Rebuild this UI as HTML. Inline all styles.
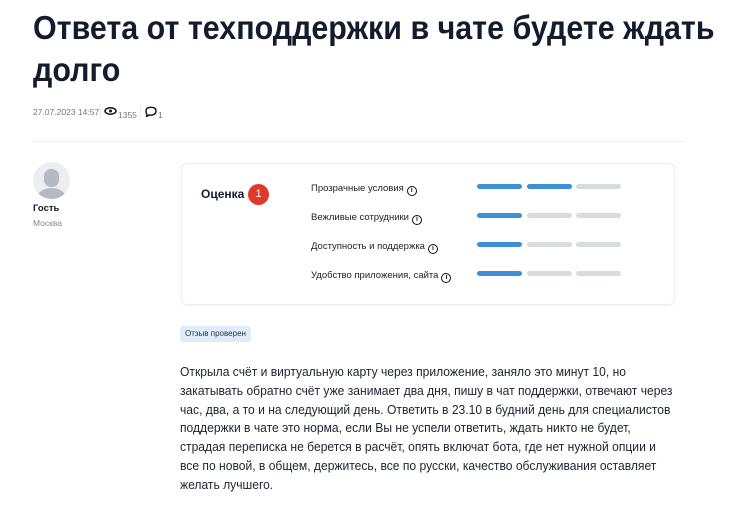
<!DOCTYPE html>
<html><head><meta charset="utf-8"><style>
*{margin:0;padding:0;box-sizing:border-box}
body{width:751px;height:507px;background:#fff;font-family:"Liberation Sans","Noto Sans CJK SC",sans-serif;color:#141b2d;position:relative;overflow:hidden}
.abs{position:absolute}
.h{position:absolute;left:33px;font-size:33px;line-height:42px;font-weight:bold;white-space:nowrap;transform:scaleX(0.922);transform-origin:0 0;color:#141b2d}
.meta{font-size:8.5px;color:#777;white-space:nowrap}
.hr{left:33px;top:141px;width:653px;height:1px;background:#f0f0f0}
.card{left:181px;top:163px;width:494px;height:142px;border:1px solid #eee;border-radius:6px;box-shadow:0 1px 3px rgba(0,0,0,.05)}
.lab{left:311px;font-size:9.5px;color:#222;white-space:nowrap;line-height:12px}
.i{display:inline-block;width:10px;height:10px;border:1.4px solid #111;border-radius:50%;font-size:7px;line-height:7px;text-align:center;font-weight:bold;vertical-align:-1px;margin-left:3px}
.bar{width:45px;height:5px;border-radius:3px;background:#d8dbe0}
.b{background:#3d8fd6}
.txt{left:180px;top:363px;font-size:13px;line-height:18.8px;color:#1d2333;white-space:nowrap;transform:scaleX(0.93);transform-origin:0 0}
</style></head><body>
<div class="h" style="top:7px">Ответа от техподдержки в чате будете ждать</div>
<div class="h" style="top:49px">долго</div>
<div class="abs meta" style="left:33px;top:107px">27.07.2023 14:57</div>
<div class="abs" style="left:100px;top:104px;width:1px;height:14px;background:#eee"></div>
<svg class="abs" style="left:104px;top:107px" width="13" height="8" viewBox="0 0 13 8"><ellipse cx="6.5" cy="4" rx="5.5" ry="3.2" fill="none" stroke="#111" stroke-width="1.5"/><circle cx="6.5" cy="4" r="1.5" fill="#111"/></svg>
<div class="abs meta" style="left:118px;top:110px">1355</div>
<div class="abs" style="left:140px;top:104px;width:1px;height:14px;background:#eee"></div>
<svg class="abs" style="left:145px;top:106px" width="12" height="11" viewBox="0 0 12 11"><path d="M2 8.5 L1.5 10.5 L4 9 Q6 9.3 8 8.8 Q11 8 11 5 Q11 1.3 6 1.3 Q1 1.3 1 5 Q1 7 2 8.5Z" fill="none" stroke="#111" stroke-width="1.4"/></svg>
<div class="abs meta" style="left:158px;top:110px">1</div>
<div class="abs hr"></div>
<div class="abs" style="left:33px;top:162px;width:37px;height:37px;border-radius:50%;background:#eceef1;overflow:hidden">
<div class="abs" style="left:11px;top:7px;width:15px;height:18px;border-radius:7px;background:#b4b9c2"></div>
<div class="abs" style="left:4px;top:26px;width:29px;height:20px;border-radius:50%;background:#b4b9c2"></div></div>
<div class="abs" style="left:33px;top:203px;font-size:9.5px;font-weight:bold">Гость</div>
<div class="abs" style="left:33px;top:218px;font-size:8.5px;color:#888">Москва</div>
<div class="abs card"></div>
<div class="abs" style="left:201px;top:187px;font-size:12px;font-weight:bold">Оценка</div>
<div class="abs" style="left:248px;top:184px;width:21px;height:21px;border-radius:50%;background:#e0392b;color:#fff;font-size:11px;line-height:21px;text-align:center">1</div>
<div class="abs lab" style="top:183px">Прозрачные условия<span class="i">i</span></div>
<div class="abs lab" style="top:212px">Вежливые сотрудники<span class="i">i</span></div>
<div class="abs lab" style="top:241px">Доступность и поддержка<span class="i">i</span></div>
<div class="abs lab" style="top:270px">Удобство приложения, сайта<span class="i">i</span></div>
<div class="abs bar b" style="left:477px;top:184px"></div><div class="abs bar b" style="left:527px;top:184px"></div><div class="abs bar" style="left:576px;top:184px"></div>
<div class="abs bar b" style="left:477px;top:213px"></div><div class="abs bar" style="left:527px;top:213px"></div><div class="abs bar" style="left:576px;top:213px"></div>
<div class="abs bar b" style="left:477px;top:242px"></div><div class="abs bar" style="left:527px;top:242px"></div><div class="abs bar" style="left:576px;top:242px"></div>
<div class="abs bar b" style="left:477px;top:271px"></div><div class="abs bar" style="left:527px;top:271px"></div><div class="abs bar" style="left:576px;top:271px"></div>
<div class="abs" style="left:180px;top:326px;height:16px;padding:0 5px;background:#deedfb;border-radius:3px;font-size:8px;line-height:16px;color:#333">Отзыв проверен</div>
<div class="abs txt">Открыла счёт и виртуальную карту через приложение, заняло это минут 10, но<br>закатывать обратно счёт уже занимает два дня, пишу в чат поддержки, отвечают через<br>час, два, а то и на следующий день. Ответить в 23.10 в будний день для специалистов<br>поддержки в чате это норма, если Вы не успели ответить, ждать никто не будет,<br>страдая переписка не берется в расчёт, опять включат бота, где нет нужной опции и<br>все по новой, в общем, держитесь, все по русски, качество обслуживания оставляет<br>желать лучшего.</div>
</body></html>
